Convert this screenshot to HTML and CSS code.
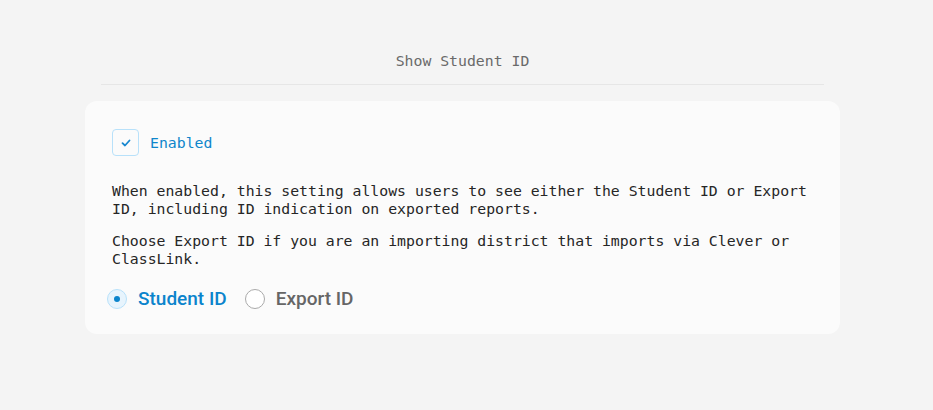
FILE: index.html
```html
<!DOCTYPE html>
<html lang="en">
<head>
    <meta charset="UTF-8">
    <title>Show Student ID</title>
    <link rel="stylesheet" href="styles.css">
</head>
<body>
    <div class="page">
        <h2 class="title">Show Student ID</h2>
        <div class="card">
            <label class="check">
                <span class="box">
                    <svg width="10" height="8" viewBox="0 0 10 8"><path d="M1.5 4.2 L4 6.5 L8.5 1.5" fill="none" stroke="#1787cf" stroke-width="1.8" stroke-linecap="round" stroke-linejoin="round"/></svg>
                </span>
                <span class="check-label">Enabled</span>
            </label>
            <p class="desc">When enabled, this setting allows users to see either the Student ID or Export ID, including ID indication on exported reports.</p>
            <p class="desc">Choose Export ID if you are an importing district that imports via Clever or ClassLink.</p>
            <div class="radios">
                <label class="radio active"><span class="dot"></span>Student ID</label>
                <label class="radio"><span class="dot"></span>Export ID</label>
            </div>
        </div>
    </div>
</body>
</html>
```
FILE: styles.css
```css
body {
    margin: 0;
    background-color: #f4f4f4;
    font-family: "DejaVu Sans Mono", "Liberation Mono", monospace;
    color: #262626;
}
.page {
    width: 755px;
    margin-left: 85px;
    padding-top: 51px;
}
.title {
    margin: 0 16px;
    padding-bottom: 14px;
    border-bottom: 1px solid #e6e6e6;
    text-align: center;
    font-size: 14.8px;
    font-weight: normal;
    color: #6a6a6a;
    line-height: 19px;
}
.card {
    margin-top: 16px;
    background: #fbfbfb;
    border-radius: 12px;
    padding: 28px 27px 24px 27px;
}
.check {
    display: flex;
    align-items: center;
    gap: 11px;
}
.box {
    width: 25px;
    height: 25px;
    border: 1px solid #b8e1fa;
    border-radius: 4px;
    display: flex;
    align-items: center;
    justify-content: center;
}
.check-label {
    color: #0f86cb;
    font-size: 14.8px;
}
.desc {
    margin: 0;
    font-size: 14.8px;
    line-height: 18px;
}
.check + .desc {
    margin-top: 26px;
}
.desc + .desc {
    margin-top: 14px;
}
.radios {
    display: flex;
    gap: 18px;
    margin-top: 19px;
    margin-left: -5px;
}
.radio {
    display: flex;
    align-items: center;
    gap: 11px;
    font-family: Roboto, sans-serif;
    font-weight: 500;
    font-size: 19px;
    color: #666;
}
.dot {
    width: 20px;
    height: 20px;
    border: 1px solid #aaa;
    border-radius: 50%;
    box-sizing: border-box;
    display: flex;
    align-items: center;
    justify-content: center;
    background: #fff;
}
.radio.active {
    color: #0b84cc;
}
.radio.active .dot {
    background: #e7f4fd;
    border-color: #b8e1fa;
}
.radio.active .dot::after {
    content: "";
    width: 6px;
    height: 6px;
    border-radius: 50%;
    background: #0b84cc;
}
```
